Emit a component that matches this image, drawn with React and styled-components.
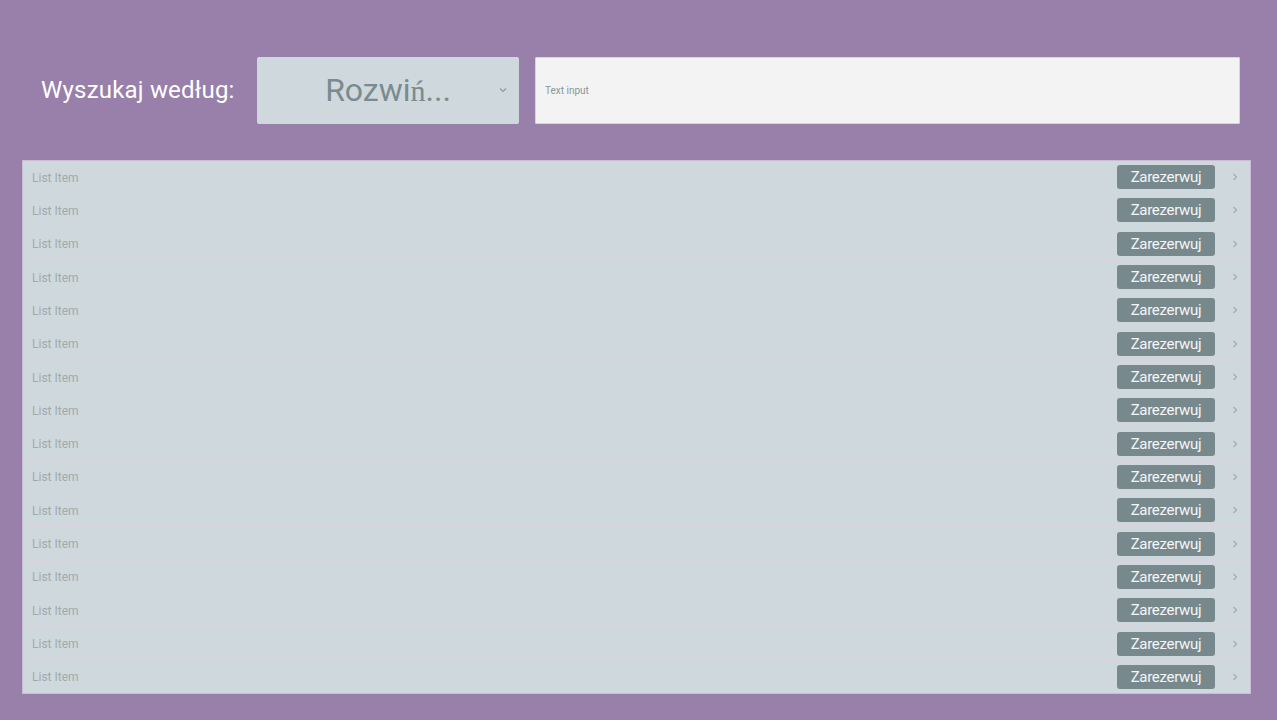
import React from 'react';
import styled, { createGlobalStyle } from 'styled-components';

const GlobalStyle = createGlobalStyle`
	html, body {
		margin: 0;
		padding: 0;
		background: #9880aa;
		font-family: Roboto, 'Liberation Sans', sans-serif;
	}
`;

const items = Array.from({ length: 16 }, () => 'List Item');

const App = () => {
	return (
		<Page>
			<GlobalStyle />
			<SearchBar>
				<Label>Wyszukaj według:</Label>
				<Dropdown>
					<DropdownText>
						Rozwi<Fallback>ń</Fallback>...
					</DropdownText>
					<Caret>
						<svg width="8" height="6" viewBox="0 0 8 6">
							<path d="M1 1.5 L4 4.5 L7 1.5" fill="none" stroke="#8e9ea3" strokeWidth="1.2" />
						</svg>
					</Caret>
				</Dropdown>
				<TextInput placeholder="Text input" />
			</SearchBar>
			<List>
				{items.map((item, i) => (
					<Row key={i}>
						<ItemText>{item}</ItemText>
						<BookButton>Zarezerwuj</BookButton>
						<Chevron>
							<svg width="6" height="8" viewBox="0 0 6 8">
								<path d="M1.5 1 L4.5 4 L1.5 7" fill="none" stroke="#a2adb1" strokeWidth="1.2" />
							</svg>
						</Chevron>
					</Row>
				))}
			</List>
		</Page>
	);
};

export default App;

const Page = styled.div`
	width: 1277px;
	height: 720px;
	box-sizing: border-box;
	padding: 57px 26px 0 22px;
	display: flex;
	flex-direction: column;
`;

const SearchBar = styled.div`
	display: flex;
	align-items: center;
	height: 67px;
	padding-left: 19px;
	padding-right: 11px;
`;

const Label = styled.div`
	color: #ffffff;
	font-size: 24px;
	letter-spacing: 0.2px;
	width: 216px;
	flex-shrink: 0;
	padding-bottom: 1px;
`;

const Dropdown = styled.div`
	width: 262px;
	height: 67px;
	flex-shrink: 0;
	background: #cfd8dc;
	border-radius: 2px;
	display: flex;
	align-items: center;
	justify-content: center;
	position: relative;
	margin-right: 16px;
`;

const DropdownText = styled.div`
	color: #7a8b90;
	font-size: 32px;
	padding-bottom: 1px;
`;

const Fallback = styled.span`
	font-family: 'Liberation Serif', serif;
	font-size: 30px;
`;

const Caret = styled.div`
	position: absolute;
	right: 12px;
	top: 30px;
	display: flex;
`;

const TextInput = styled.input`
	flex: 1;
	height: 67px;
	box-sizing: border-box;
	background: #f3f3f3;
	border: 1px solid #d9d2e0;
	border-radius: 1px;
	padding: 0 9px;
	font-family: Roboto, 'Liberation Sans', sans-serif;
	font-size: 10px;
	outline: none;
	&::placeholder {
		color: #8a9599;
	}
`;

const List = styled.div`
	margin-top: 36px;
	height: 534px;
	box-sizing: border-box;
	border: 1px solid #c9bcd3;
	background: #cfd8dc;
	display: flex;
	flex-direction: column;
`;

const Row = styled.div`
	flex: 1;
	display: flex;
	align-items: center;
	padding: 0 10px 0 9px;
	border-bottom: 1px solid #d9d3e0;
	&:last-child {
		border-bottom: none;
	}
`;

const ItemText = styled.div`
	flex: 1;
	color: #a1aaad;
	font-size: 12px;
	padding-top: 1px;
`;

const BookButton = styled.button`
	width: 98px;
	height: 24px;
	border: none;
	border-radius: 3px;
	background: #78898e;
	color: #f4f6f7;
	font-family: Roboto, 'Liberation Sans', sans-serif;
	font-size: 15px;
	letter-spacing: -0.3px;
	padding: 0;
	margin-right: 15px;
`;

const Chevron = styled.div`
	width: 10px;
	display: flex;
	justify-content: center;
`;
